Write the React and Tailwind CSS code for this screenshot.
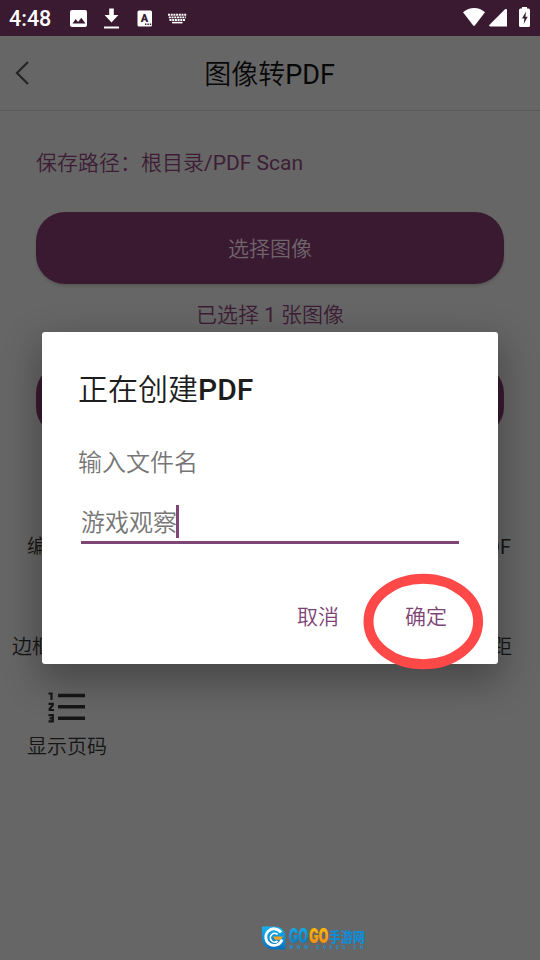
const StatusBar = () => {
  return (
    <div className="h-9 bg-[#3a1a31] flex items-center text-white">
      <span className="ml-[9px] mt-px w-[42px] text-[21.5px] leading-none font-medium">
        4:48
      </span>
      {/* Notification icons */}
      <svg className="ml-[17px]" width="124" height="36" viewBox="0 0 124 36">
        <rect x="2" y="10" width="17" height="17" rx="2" fill="#fff" />
        <path d="M4.5 23.500l3.200-4.500 2.400 3 3.200-4.300 4.200 5.800z" fill="#3a1a31" />
        <path
          d="M41.200 8.500h4.600v6.500h4.600l-6.900 7.500-6.900-7.500h4.600zM36 26.500h15v2H36z"
          fill="#fff"
        />
        <rect x="69.500" y="10.500" width="14.500" height="16" rx="1.500" fill="#fff" />
        <text
          x="76.500"
          y="22"
          textAnchor="middle"
          fontSize="11"
          fontWeight="900"
          fill="#3a1a31"
        >
          A
        </text>
        <path
          d="M77 23.500h1.400v1.400H77zM79.400 23.500h1.400v1.400h-1.400zM81.800 23.500h1.400v1.400h-1.400z"
          fill="#3a1a31"
        />
        <g stroke="#fff" strokeWidth="1.900" strokeDasharray="2 .7">
          <path d="M100 14.800h18.600M100.800 17.400h17M101.500 20h15.500" />
        </g>
        <path d="M104 22.600h10.500" stroke="#fff" strokeWidth="1.600" />
      </svg>
      {/* Wifi, signal and battery */}
      <svg className="ml-auto" width="80" height="36" viewBox="460 0 80 36">
        <path
          d="M463 12.300C469.500 6.600 479 6.600 485 12.300L475 25.300Q474 26.500 473 25.300Z"
          fill="#fff"
        />
        <path
          d="M507 9.500V26.500H490Q488.300 26 489.500 24.800L505 9.300Q506.500 8.400 507 9.500Z"
          fill="#fff"
        />
        <path
          d="M522 7h5v1.600h1.500q1.500 0 1.500 1.500V25.500q0 1.500-1.500 1.500h-8q-1.500 0-1.500-1.500V10.100q0-1.500 1.500-1.500h1.500z"
          fill="#fff"
        />
        <path d="M526 11.500l-4 7h2.400l-.7 5.500 4-7.300h-2.300z" fill="#3a1a31" />
      </svg>
    </div>
  );
};

const NumberedListIcon = () => {
  return (
    <svg width="38" height="32" viewBox="0 0 38 32" fill="none">
      <path
        d="M10 3.500h27M10 14.800h27M10 26.200h27"
        stroke="#161616"
        strokeWidth="3.600"
      />
      <path
        d="M.5 1.500h3v6.500M.5 11.900h4.200v1.500L1.700 16.700v1.300h4.300M.5 23.200h4.300v6.200H.5M1.500 26.300h3"
        stroke="#161616"
        strokeWidth="2.200"
      />
    </svg>
  );
};

const SiteLogo = () => {
  return (
    <svg width="110" height="28" viewBox="0 0 110 28">
      <defs>
        <linearGradient id="logoBlue" x1="0" y1="0" x2="0" y2="1">
          <stop offset="0" stopColor="#16b4ee" />
          <stop offset="1" stopColor="#0870bd" />
        </linearGradient>
        <linearGradient id="logoOrange" x1="0" y1="0" x2="0" y2="1">
          <stop offset="0" stopColor="#ffc400" />
          <stop offset="1" stopColor="#f48216" />
        </linearGradient>
      </defs>
      <path
        d="M1 1.500h13c7 0 10.500 5 10.500 11v12H13C5 24.500 1 19 1 13z"
        fill="url(#logoBlue)"
      />
      <path
        d="M20 7.500A8.300 8.300 0 1 0 21 14.500"
        fill="none"
        stroke="#fff"
        strokeWidth="2.800"
      />
      <path
        d="M16.500 9.500A4.300 4.300 0 1 0 16.500 16"
        fill="none"
        stroke="#fff"
        strokeWidth="1.700"
      />
      <path d="M12 11.500h10l-2.500 3.300h-5.500z" fill="#f8a51b" />
      <g className="font-[Inter] font-black" fontSize="20">
        <text
          x="28"
          y="18"
          textLength="19.500"
          lengthAdjust="spacingAndGlyphs"
          fill="url(#logoBlue)"
        >
          GO
        </text>
        <text
          x="48"
          y="18"
          textLength="19.500"
          lengthAdjust="spacingAndGlyphs"
          fill="url(#logoOrange)"
        >
          GO
        </text>
      </g>
      <text
        x="68"
        y="16.500"
        fontSize="14"
        textLength="36"
        lengthAdjust="spacingAndGlyphs"
        fill="#118bd1"
        className="font-black"
      >
        手游网
      </text>
      <text
        x="28.500"
        y="24.300"
        fontSize="4.500"
        textLength="74"
        fill="#1590d2"
        className="font-bold"
      >
        WWW.GO9GO.CN
      </text>
    </svg>
  );
};

const Dialog = () => {
  return (
    <div className="absolute left-[42px] top-[332px] w-[456px] h-[332px] bg-white rounded-[3px] shadow-[0_14px_36px_4px_rgba(0,0,0,0.3)] px-9 flex flex-col">
      <h2 className="mt-9 h-11 leading-[44px] text-[30px] font-medium text-[#1d1d1d]">
        <span className="font-[350]">正在创建</span>PDF
      </h2>
      <p className="mt-[33px] h-9 leading-9 text-[24px] font-[350] text-[#767676]">
        输入文件名
      </p>
      <div className="mt-[22px] mx-[3px] h-[41px] border-b-3 border-[#7f4675] flex items-start">
        <span className="mt-[2px] leading-9 text-[24px] font-[350] text-[#767676]">
          游戏观察
        </span>
        <span className="-ml-px mt-[2px] w-[3px] h-[33px] bg-[#7f4675]" />
      </div>
      <div className="mt-[55px] pr-[15px] flex justify-end gap-[66px] text-[21px] leading-9 font-[350] text-[#7d4274]">
        <button>取消</button>
        <button>确定</button>
      </div>
      {/* Highlight around the confirm button */}
      <svg
        className="absolute left-[321px] top-[241px] pointer-events-none"
        width="121"
        height="98"
        viewBox="0 0 121 98"
      >
        <ellipse
          cx="60.300"
          cy="48.500"
          rx="54.800"
          ry="42.700"
          fill="none"
          stroke="#ff4949"
          strokeWidth="10"
        />
      </svg>
    </div>
  );
};

const App = () => {
  return (
    <div className="relative w-[540px] h-[960px] overflow-hidden bg-[#666666] font-[Roboto,'Noto_Sans_CJK_SC',sans-serif] flex flex-col">
      <StatusBar />

      {/* Header */}
      <div className="h-[75px] border-b border-[#5b5b5b] flex items-center">
        <svg className="ml-[14px]" width="18" height="26" viewBox="0 0 18 26">
          <path
            d="M14 2L3 13l11 11"
            fill="none"
            stroke="#252525"
            strokeWidth="2.200"
          />
        </svg>
        <h1 className="flex-1 pt-1 pr-[33px] text-center text-[27px] text-[#080808]">
          <span className="font-[350]">图像转</span>PDF
        </h1>
      </div>

      {/* Page content */}
      <div className="px-9 flex flex-col text-[21px] text-[#3d1d35]">
        <p className="mt-9 h-8 leading-8">
          <span className="font-[350]">保存路径：根目录</span>/PDF Scan
        </p>
        <button className="mt-[33px] h-[72px] pt-1 rounded-[29px] bg-[#3a1a31] font-[350] text-[#70656d] shadow-[0_2px_3px_rgba(0,0,0,0.15)]">
          选择图像
        </button>
        <p className="mt-[15px] h-8 leading-8 text-center font-[350]">
          已选择 <span className="font-normal">1</span> 张图像
        </p>
        <div className="mt-[33px] h-[72px] rounded-[29px] bg-[#3a1a31]" />
      </div>

      {/* Options */}
      <div className="mt-[95px] text-[20px] leading-8 font-[350] text-[#151515]">
        <div className="flex justify-between pl-[27px] pr-[29px]">
          <span>编</span>
          <span className="font-normal">PDF</span>
        </div>
        <div className="mt-[68px] flex justify-between pl-3 pr-7">
          <span>边框</span>
          <span>距</span>
        </div>
        <div className="mt-[29px] w-[134px] flex flex-col items-center">
          <NumberedListIcon />
          <span className="mt-[7px]">显示页码</span>
        </div>
      </div>

      <div className="mt-auto mb-[7px] ml-[261px]">
        <SiteLogo />
      </div>

      <Dialog />
    </div>
  );
};

export default App;
